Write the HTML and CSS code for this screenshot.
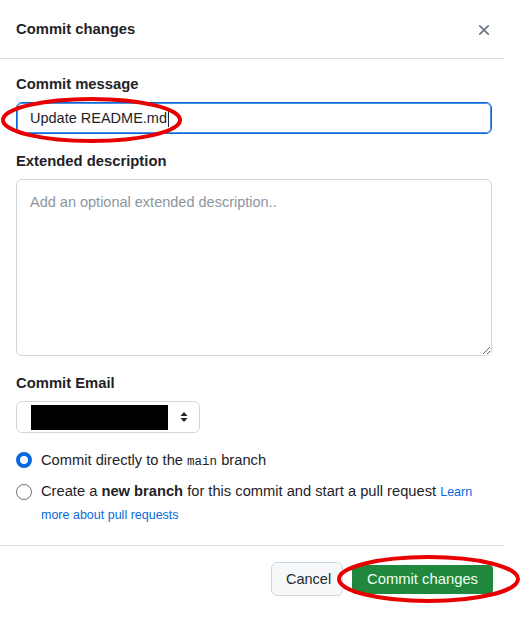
FILE: index.html
```html
<!DOCTYPE html>
<html>
<head>
<meta charset="utf-8">
<link rel="stylesheet" href="styles.css">
</head>
<body>
<div class="dialog">
  <div class="header">
    <h1 class="title">Commit changes</h1>
    <svg class="close" viewBox="0 0 16 16" width="18" height="18"><path fill="#6e7781" d="M3.72 3.72a.75.75 0 0 1 1.06 0L8 6.940l3.22-3.22a.749.749 0 0 1 1.275.326.749.749 0 0 1-.215.734L9.06 8l3.220 3.22a.749.749 0 0 1-.326 1.275.749.749 0 0 1-.734-.215L8 9.06l-3.22 3.22a.751.751 0 0 1-1.042-.018.751.751 0 0 1-.018-1.042L6.94 8 3.72 4.78a.75.75 0 0 1 0-1.06Z"/></svg>
  </div>
  <div class="body">
    <div class="label">Commit message</div>
    <div class="input"><span>Update README.md</span><span class="caret"></span></div>
    <div class="label">Extended description</div>
    <textarea class="textarea" placeholder="Add an optional extended description.."></textarea>
    <div class="label">Commit Email</div>
    <div class="select">
      <span class="redacted"></span>
      <svg class="arrows" viewBox="0 0 8 12" width="8" height="12"><path fill="#1f2328" d="M4 1 L7.5 5 H0.5 Z M0.5 7 H7.5 L4 11 Z"/></svg>
    </div>
    <div class="radios">
      <div class="radio-row">
        <span class="radio checked"></span>
        <span class="radio-text">Commit directly to the <code class="mono">main</code> branch</span>
      </div>
      <div class="radio-row tall">
        <span class="radio"></span>
        <span class="radio-text">Create a <b>new branch</b> for this commit and start a pull request <a class="link" href="#">Learn more about pull requests</a></span>
      </div>
    </div>
  </div>
  <div class="footer">
    <button class="btn">Cancel</button>
    <button class="btn primary">Commit changes</button>
  </div>
</div>
<svg class="annotations" width="528" height="619" viewBox="0 0 528 619">
  <ellipse cx="91.5" cy="120" rx="88.5" ry="21" fill="none" stroke="#e80000" stroke-width="4"/>
  <ellipse cx="428.5" cy="579" rx="89.5" ry="22" fill="none" stroke="#e80000" stroke-width="4"/>
</svg>
</body>
</html>
```
FILE: styles.css
```css
* { box-sizing: border-box; }
html, body { margin: 0; padding: 0; background: #fff; }
body {
  font-family: "Liberation Sans", Arial, sans-serif;
  color: #1f2328;
  font-size: 14.5px;
  position: relative;
  width: 528px;
  height: 619px;
  overflow: hidden;
}
.dialog { width: 504px; }
.header {
  height: 59px;
  border-bottom: 1px solid #d8dee4;
  display: flex;
  align-items: center;
  justify-content: space-between;
  padding: 0 11px 0 16px;
}
.title { margin: 0; font-size: 14.8px; font-weight: bold; line-height: 20px; }
.close { display: block; margin-top: 2px; }
.body { padding: 15px 12px 19px 16px; }
.label { font-weight: bold; line-height: 20px; margin-bottom: 8px; font-size: 14.8px; }
.input {
  height: 32px;
  border: 1px solid #0969da;
  box-shadow: inset 0 0 0 1px #4a90e2;
  border-radius: 6px;
  padding: 0 13px;
  display: flex;
  align-items: center;
  margin-bottom: 17px;
  line-height: 20px;
}
.caret { width: 1px; height: 17px; background: #1f2328; margin-left: 1px; }
.textarea {
  display: block;
  width: 100%;
  height: 177px;
  border: 1px solid #d0d7de;
  border-radius: 6px;
  padding: 12px 13px;
  font-family: "Liberation Sans", Arial, sans-serif;
  font-size: 14.5px;
  line-height: 20px;
  color: #1f2328;
  margin: 0 0 17px 0;
  resize: vertical;
  outline: none;
}
.textarea::placeholder { color: #8c959f; }
.select {
  width: 184px;
  height: 32px;
  border: 1px solid #d0d7de;
  border-radius: 6px;
  display: flex;
  align-items: center;
  justify-content: space-between;
  padding: 0 11px 0 14px;
  margin-bottom: 17px;
}
.redacted { width: 137px; height: 25px; background: #000; }
.arrows { display: block; }
.radios { display: flex; flex-direction: column; gap: 10px; }
.radio-row { display: flex; gap: 9px; align-items: flex-start; line-height: 20px; font-size: 14.7px; }
.radio-row.tall { line-height: 23px; }
.radio-text { display: block; }
.radio {
  flex: none;
  width: 16px;
  height: 16px;
  border-radius: 50%;
  border: 1px solid #6e7781;
  margin-top: 2px;
  background: #fff;
}
.radio-row.tall .radio { margin-top: 3.5px; }
.radio.checked { border: 4.5px solid #0969da; }
.mono { font-family: "Liberation Mono", monospace; font-size: 12.5px; line-height: 1; }
.radio-text b { font-weight: bold; }
.link { color: #0969da; font-size: 12.5px; line-height: 1; text-decoration: none; }
.footer {
  border-top: 1px solid #d8dee4;
  padding: 16px 11px 16px 16px;
  display: flex;
  justify-content: flex-end;
  align-items: center;
  gap: 9px;
}
.btn {
  font-family: "Liberation Sans", Arial, sans-serif;
  font-size: 14.5px;
  height: 34px;
  border-radius: 6px;
  border: 1px solid #d0d7de;
  background: #f6f8fa;
  color: #24292f;
  padding: 0 14px;
  width: 72px;
}
.btn.primary {
  width: 141px;
  height: 29px;
  border: none;
  border-radius: 4px;
  background: #1f883d;
  color: #f3fff3;
  font-size: 14.8px;
}
.annotations { position: absolute; left: 0; top: 0; pointer-events: none; }
```
